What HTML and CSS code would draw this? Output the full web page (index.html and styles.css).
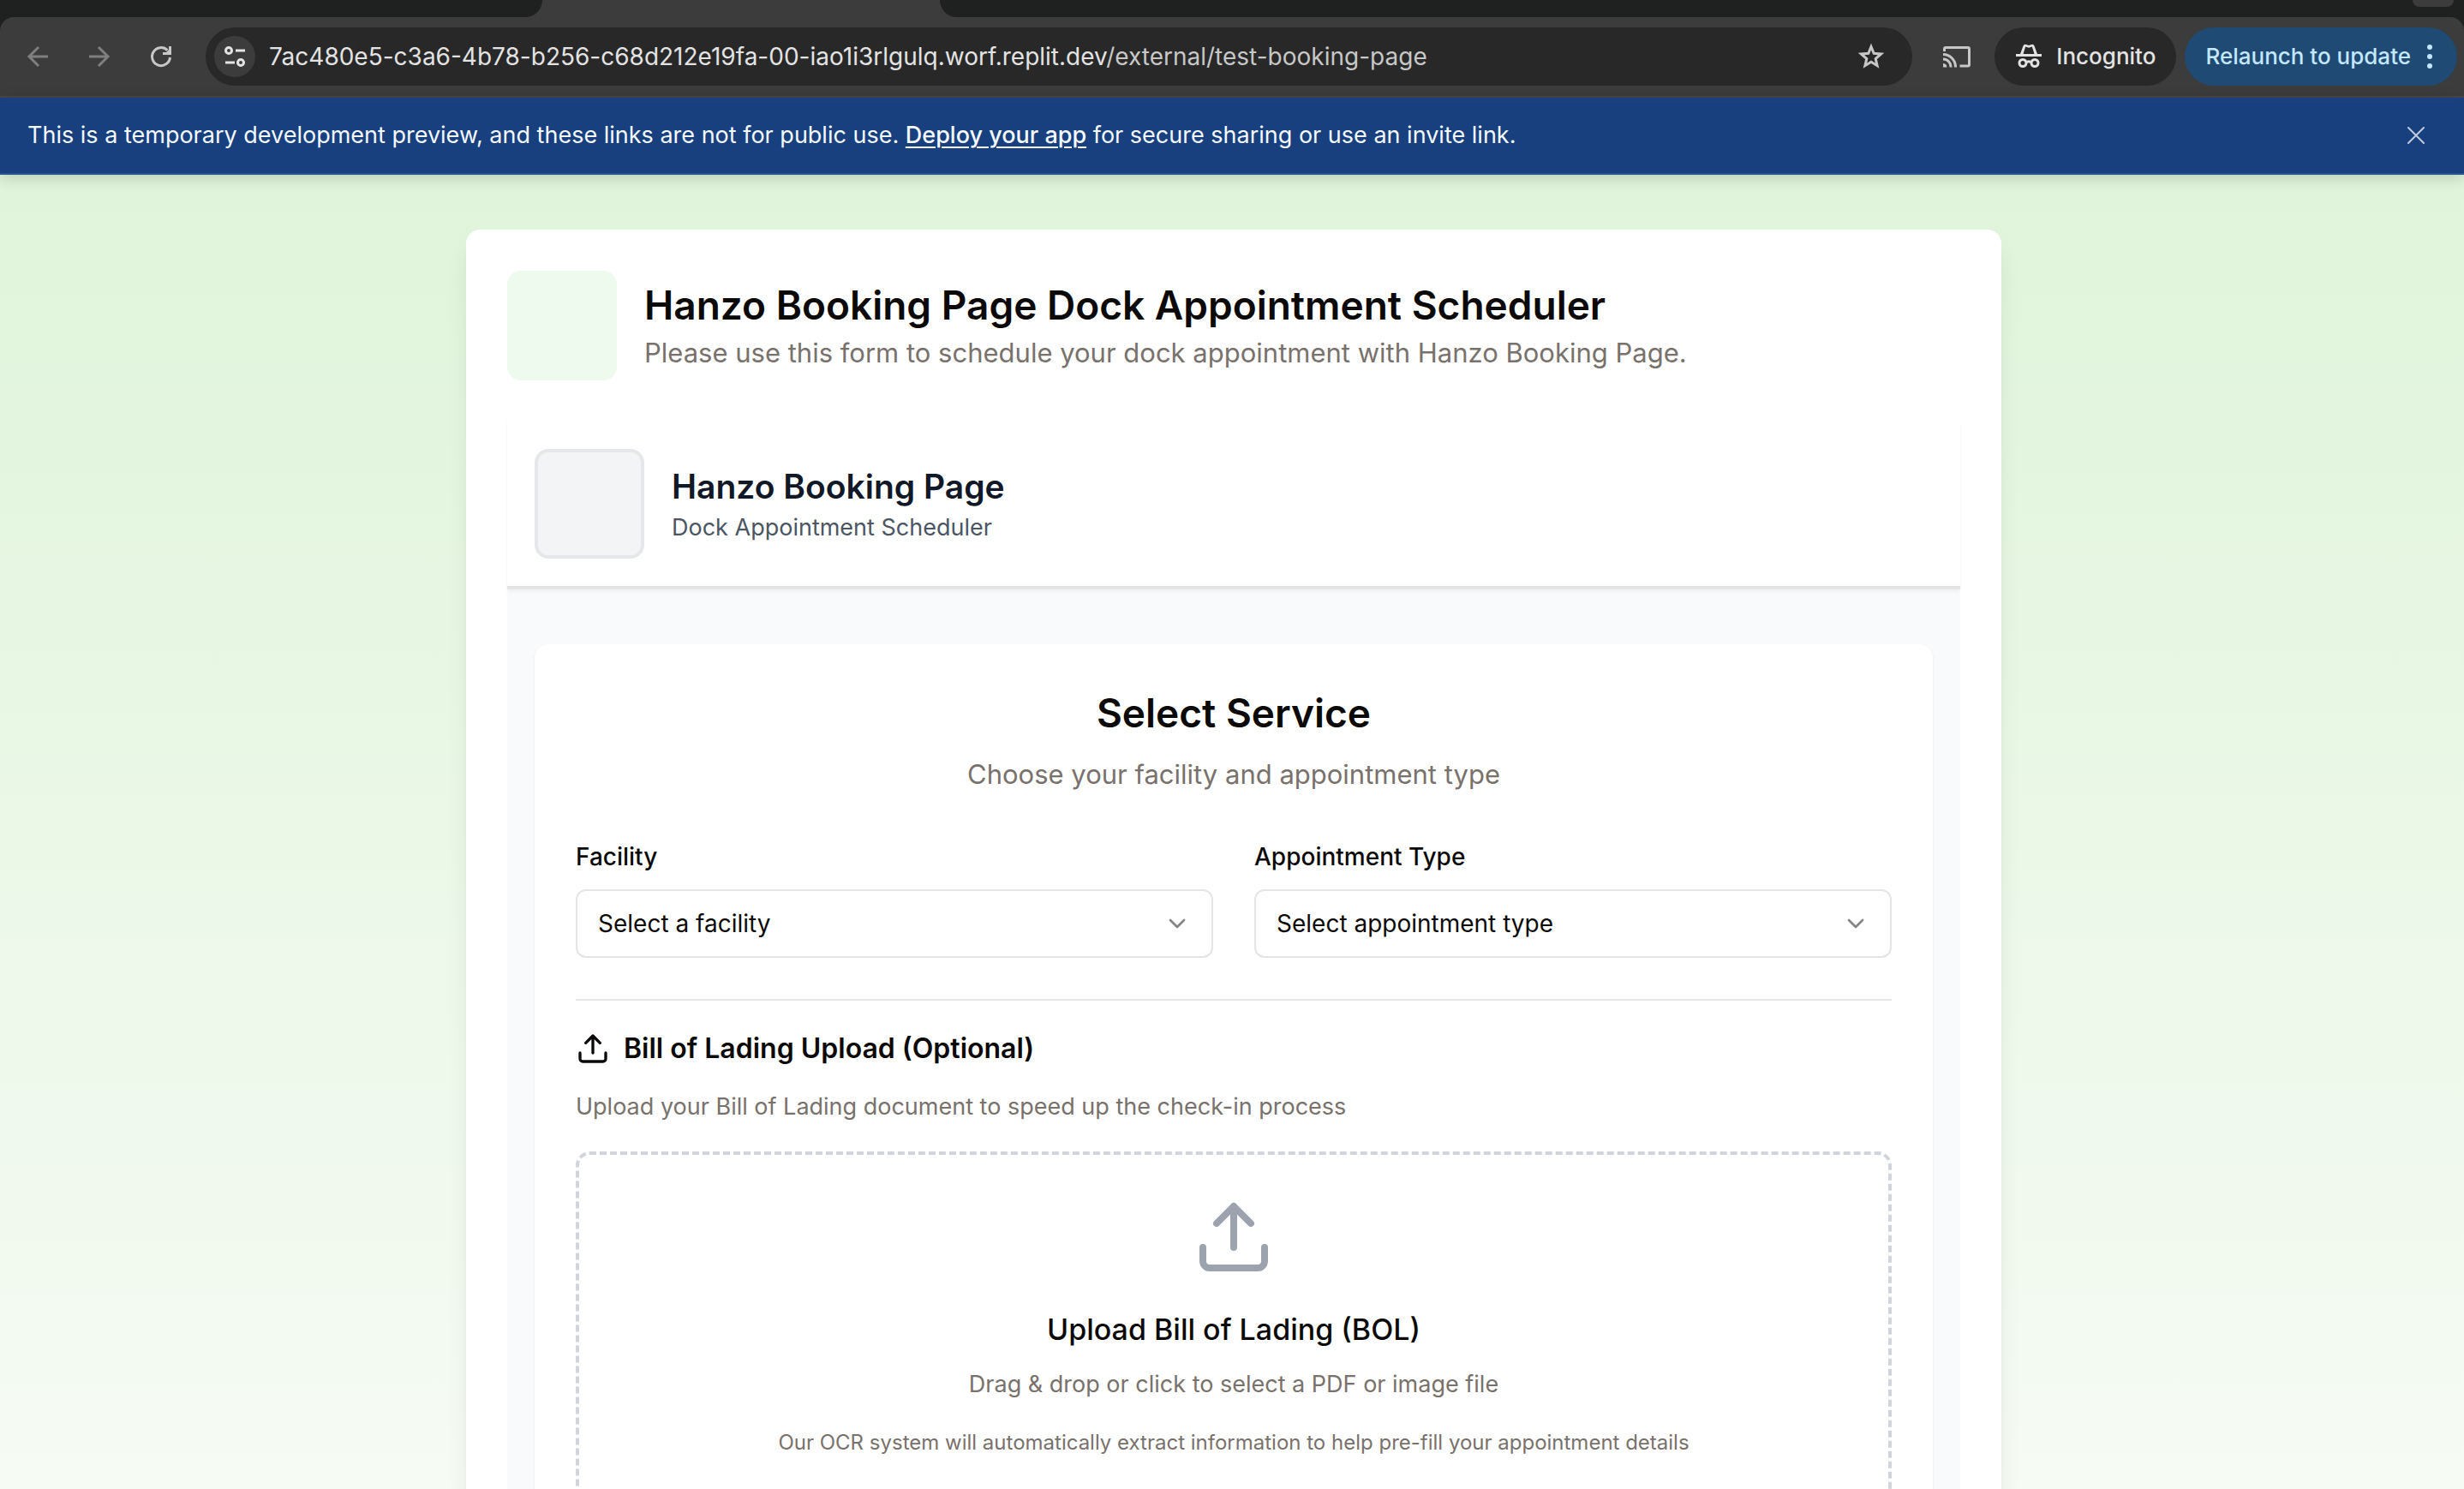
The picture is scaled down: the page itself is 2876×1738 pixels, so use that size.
FILE: index.html
```html
<!DOCTYPE html>
<html lang="en">
<head>
<meta charset="utf-8">
<meta name="viewport" content="width=device-width, initial-scale=1">
<title>Hanzo Booking Page Dock Appointment Scheduler</title>
<link rel="stylesheet" href="styles.css">
</head>
<body>
<div class="tabstrip">
  <div class="tab-idle tab-first"></div>
  <div class="tab-active"></div>
  <div class="tab-idle tab-rest"><span class="tab-search"></span></div>
</div>
<header class="toolbar">
  <nav class="nav-buttons" aria-label="Browser">
    <button class="icon-button dim" aria-label="Back"><svg viewBox="0 0 32 32"><path d="M28 16H6M17 5 6 16l11 11"/></svg></button>
    <button class="icon-button dim" aria-label="Forward"><svg viewBox="0 0 32 32"><path d="M4 16h22M15 5l11 11-11 11"/></svg></button>
    <button class="icon-button" aria-label="Reload"><svg viewBox="0 0 32 32"><path d="M26.500 17a10.500 10.500 0 1 1-3.100-8.400"/><path class="solid" d="M28 4v10H18v-3h4l3-3V4z"/></svg></button>
  </nav>
  <div class="address">
    <button class="site-info" aria-label="Site information"><svg viewBox="0 0 32 32"><circle cx="9" cy="9" r="3.500"/><path d="M17 9h11M5 23h11"/><circle cx="23" cy="23" r="3.500"/></svg></button>
    <p class="url">7ac480e5-c3a6-4b78-b256-c68d212e19fa-00-iao1i3rlgulq.worf.replit.dev<span class="path">/external/test-booking-page</span></p>
    <button class="icon-button" aria-label="Bookmark"><svg viewBox="0 0 32 32"><path d="m16 4.500 3.200 7.800 8.400.7-6.400 5.500 1.900 8.200-7.100-4.400-7.100 4.400 1.900-8.200L4.400 13l8.400-.7z"/></svg></button>
  </div>
  <button class="icon-button cast" aria-label="Cast"><svg viewBox="0 0 32 32"><path d="M1.500 10V7q0-1.500 1.500-1.500h26q1.500 0 1.500 1.500v18.500q0 1.500-1.500 1.500H19.500"/><path d="M0 13.500A14.500 14.500 0 0 1 14.500 28.500M0 19A9 9 0 0 1 9 28.500"/><path class="solid" d="M0 24A4.500 4.500 0 0 1 4.500 28.500H0z"/></svg></button>
  <button class="pill incognito"><svg viewBox="0 0 32 32"><path class="solid" d="M9.500 3.500Q10.500 1 13 2l3 1 3-1q2.500-1 3.500 1.500L26 13h5v3H1v-3h5z"/><path class="hat-gap" d="M9.500 13l2.700-8.500 3.800 1.300 3.800-1.300 2.700 8.500z"/><circle cx="9" cy="23.500" r="4"/><circle cx="23" cy="23.500" r="4"/><path d="M12.500 23q3.500-2.500 7 0"/></svg>Incognito</button>
  <button class="pill relaunch">Relaunch to update<svg viewBox="0 0 8 32"><circle class="solid" cx="4" cy="5" r="3"/><circle class="solid" cx="4" cy="16" r="3"/><circle class="solid" cx="4" cy="27" r="3"/></svg></button>
</header>
<aside class="banner">
  <p>This is a temporary development preview, and these links are not for public use. <a href="#deploy">Deploy your app</a> for secure sharing or use an invite link.</p>
  <button class="dismiss" aria-label="Dismiss"><svg viewBox="0 0 24 24"><path d="m3 3 18 18M21 3 3 21"/></svg></button>
</aside>
<main class="page">
  <section class="card">
    <header class="card-head">
      <div class="logo"></div>
      <div>
        <h1>Hanzo Booking Page Dock Appointment Scheduler</h1>
        <p class="lead">Please use this form to schedule your dock appointment with Hanzo Booking Page.</p>
      </div>
    </header>
    <div class="scheduler">
      <header class="scheduler-head">
        <div class="logo framed"></div>
        <div>
          <h2>Hanzo Booking Page</h2>
          <p class="tagline">Dock Appointment Scheduler</p>
        </div>
      </header>
      <form class="service">
        <div class="service-head">
          <h2 class="service-title">Select Service</h2>
          <p class="lead">Choose your facility and appointment type</p>
        </div>
        <div class="fields">
          <div class="field">
            <label for="facility">Facility</label>
            <div class="select-box"><select id="facility"><option>Select a facility</option></select><svg viewBox="0 0 24 24"><path d="m6 9 6 6 6-6"/></svg></div>
          </div>
          <div class="field">
            <label for="type">Appointment Type</label>
            <div class="select-box"><select id="type"><option>Select appointment type</option></select><svg viewBox="0 0 24 24"><path d="m6 9 6 6 6-6"/></svg></div>
          </div>
        </div>
        <section class="upload">
          <h3><svg viewBox="0 0 24 24"><path d="M21 15v4a2 2 0 0 1-2 2H5a2 2 0 0 1-2-2v-4M17 8l-5-5-5 5M12 3v12"/></svg>Bill of Lading Upload (Optional)</h3>
          <p class="hint">Upload your Bill of Lading document to speed up the check-in process</p>
          <button type="button" class="dropzone">
            <svg viewBox="0 0 24 24"><path d="M21 15v4a2 2 0 0 1-2 2H5a2 2 0 0 1-2-2v-4M17 8l-5-5-5 5M12 3v12"/></svg>
            <span class="drop-title">Upload Bill of Lading (BOL)</span>
            <span class="hint">Drag &amp; drop or click to select a PDF or image file</span>
            <span class="note">Our OCR system will automatically extract information to help pre-fill your appointment details</span>
          </button>
        </section>
      </form>
    </div>
  </section>
</main>
</body>
</html>
```
FILE: styles.css
```css
* { box-sizing: border-box; }
body {
  margin: 0;
  height: 100vh;
  display: flex;
  flex-direction: column;
  overflow: hidden;
  font-family: Inter, "Liberation Sans", sans-serif;
  font-size: 28px;
  line-height: 40px;
  color: #0c0a09;
  background: #1f2020;
}
h1, h2, h3, p { margin: 0; }
button { font: inherit; color: inherit; background: none; border: 0; padding: 0; }
svg { fill: none; stroke: currentColor; stroke-linecap: round; stroke-linejoin: round; flex: none; }
.solid { fill: currentColor; stroke: none; }

/* Browser chrome */
.tabstrip { display: flex; height: 20px; flex: none; background: #3c3c3c; }
.tab-idle { background: #1f2020; }
.tab-first { width: 22%; border-bottom-right-radius: 20px; }
.tab-active { width: 464px; }
.tab-rest { flex: 1; display: flex; justify-content: flex-end; padding-right: 12px; border-bottom-left-radius: 20px; }
.tab-search { width: 48px; height: 8px; background: #3c3c3c; border-radius: 0 0 20px 20px; }
.toolbar {
  flex: none;
  display: flex;
  align-items: center;
  height: 94px;
  padding: 0 8px 0 28px;
  color: #c7c7c7;
  background: #3c3c3c;
  border-bottom: 2px solid #474747;
  border-radius: 16px 16px 0 0;
}
.toolbar svg { width: 32px; height: 32px; stroke-width: 3; stroke-linecap: butt; stroke-linejoin: miter; }
.icon-button { display: flex; }
.dim { color: #7f7f7f; }
.nav-buttons { display: flex; gap: 40px; margin-right: 36px; }
.address {
  flex: 1;
  display: flex;
  align-items: center;
  height: 68px;
  padding: 0 32px 0 10px;
  background: #282828;
  border-radius: 34px;
}
.site-info { display: flex; align-items: center; justify-content: center; width: 48px; height: 48px; border-radius: 24px; background: #3c3c3c; color: #e3e3e3; }
.url { flex: 1; padding-left: 16px; color: #e3e3e3; }
.path { color: #c7c7c7; }
.cast { margin: 0 28px 0 36px; }
.pill { display: flex; align-items: center; height: 68px; border-radius: 34px; font-size: 26px; font-weight: 500; }
.incognito { gap: 16px; padding: 0 24px; margin-right: 10px; color: #e3e3e3; background: #282828; }
.hat-gap { fill: #282828; stroke: none; }
.relaunch { gap: 18px; padding: 0 28px 0 24px; color: #c2e7ff; background: #1f4a73; }
.relaunch svg { width: 8px; }

/* Preview banner */
.banner {
  flex: none;
  position: relative;
  z-index: 1;
  display: flex;
  align-items: center;
  justify-content: space-between;
  height: 90px;
  padding: 0 44px 0 32px;
  font-size: 27px;
  color: #f5f9fc;
  background: #18407e;
  border-bottom: 2px solid #2b5290;
  box-shadow: 0 4px 16px rgba(0, 0, 0, 0.16);
}
.banner a { color: inherit; font-weight: 500; text-decoration-thickness: 2px; text-underline-offset: 4px; }
.dismiss { display: flex; color: #c2ccdd; }
.dismiss svg { width: 24px; height: 24px; stroke-width: 2; }

/* Booking page */
.page {
  flex: 1;
  min-height: 0;
  overflow: hidden;
  padding: 64px 0 0 4px;
  background: linear-gradient(to bottom, #dff4da, #f6fbf4);
}
.card {
  max-width: 1792px;
  margin: 0 auto;
  padding: 48px;
  background: #fff;
  border-radius: 16px;
  box-shadow: 0 20px 30px -6px rgba(0, 0, 0, 0.1), 0 8px 12px -8px rgba(0, 0, 0, 0.1);
}
.card-head, .scheduler-head { display: flex; align-items: center; gap: 32px; }
.card-head { margin-bottom: 48px; }
.logo { flex: none; width: 128px; height: 128px; border-radius: 16px; background: #effaee; }
.framed { background: #f3f4f6; border: 4px solid #e5e7eb; }
h1, .service-title { font-size: 46px; line-height: 64px; font-weight: 600; }
h2 { font-size: 39px; line-height: 56px; font-weight: 600; color: #111827; }
.lead { font-size: 31px; line-height: 48px; color: #78716c; }
.tagline { font-size: 27px; color: #4b5563; }
.scheduler { background: #f8fafc; }
.scheduler-head {
  padding: 32px;
  background: #fff;
  border-bottom: 4px solid #e5e5e5;
  box-shadow: 0 2px 4px rgba(0, 0, 0, 0.05);
}
.service {
  margin: 64px 32px 0;
  padding: 48px;
  background: #fff;
  border-radius: 16px;
  box-shadow: 0 2px 4px rgba(0, 0, 0, 0.05);
}
.service-head { text-align: center; margin-bottom: 52px; }
.service-title { color: #0c0a09; margin-bottom: 16px; }
.fields { display: grid; grid-template-columns: 1fr 1fr; gap: 48px; }
.field { display: flex; flex-direction: column; gap: 18px; }
label { font-weight: 500; }
.select-box { display: grid; align-items: center; }
.select-box > * { grid-area: 1 / 1; }
select {
  appearance: none;
  width: 100%;
  height: 80px;
  padding: 0 24px;
  font: inherit;
  color: inherit;
  background: #fff;
  border: 2px solid #e5e5e5;
  border-radius: 12px;
}
.select-box svg { justify-self: end; width: 32px; height: 32px; margin-right: 26px; color: #858484; stroke-width: 2; pointer-events: none; }
.upload { margin-top: 48px; padding-top: 32px; border-top: 2px solid #e5e5e5; }
h3 { display: flex; align-items: center; gap: 16px; margin-bottom: 24px; font-size: 32px; line-height: 48px; font-weight: 600; }
h3 svg { width: 40px; height: 40px; stroke-width: 2; }
.hint { font-size: 27px; color: #78716c; }
.dropzone {
  display: flex;
  flex-direction: column;
  align-items: center;
  width: 100%;
  height: 560px;
  margin-top: 32px;
  padding-top: 48px;
  border: 4px dashed #d1d5db;
  border-radius: 16px;
}
.dropzone svg { width: 96px; height: 96px; color: #9ca3af; stroke-width: 2; margin-bottom: 32px; }
.drop-title { font-size: 34px; line-height: 56px; font-weight: 500; margin-bottom: 16px; }
.note { font-size: 24px; line-height: 32px; color: #78716c; margin-top: 32px; }
```
